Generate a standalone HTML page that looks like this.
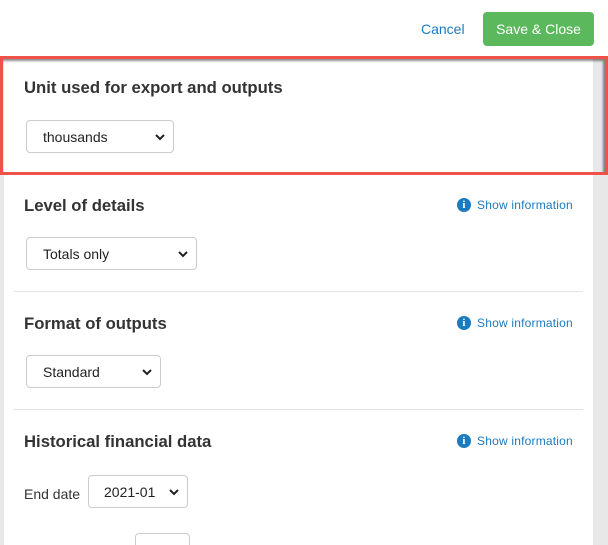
<!DOCTYPE html>
<html><head><style>
*{box-sizing:border-box;margin:0;padding:0}
html,body{width:608px;height:545px;overflow:hidden}
body{background:#fff;font-family:"Liberation Sans",Arial,sans-serif;color:#333;position:relative}
.abs{position:absolute}
.panel{left:4px;top:58px;width:589px;height:487px;background:#fff}
.lgray{left:0;top:58px;width:4px;height:487px;background:#e8e8e8}
.rgray{left:593px;top:58px;width:15px;height:487px;background:#e8e8e8}
.red{left:0;top:56px;width:608px;height:119px;border:3px solid #f0524a;box-shadow:inset -2px 2px 2px rgba(0,0,0,.45)}
.title{font-size:16.7px;font-weight:bold;left:24px}
.sel{border:1px solid #ccc;border-radius:4px;height:33px;font-size:14px;color:#222;background:#fff}
.sel span{position:absolute;left:16px;top:8px}
.sel svg{position:absolute;right:8px;top:13px}
.sep{left:14px;width:569px;height:1px;background:#e3e3e3}
.info{left:457px;font-size:12px;color:#1a7bc0;display:flex;align-items:center;height:14px;letter-spacing:0.2px}
.info i{display:inline-block;width:14px;height:14px;border-radius:50%;background:#1a7bc0;color:#fff;font-style:normal;font-weight:bold;font-size:11px;text-align:center;line-height:14px;font-family:"Liberation Serif",serif;margin-right:6px}
</style></head><body>
<div class="abs" style="left:421px;top:21px;font-size:14px;color:#1a7bc0">Cancel</div>
<div class="abs" style="left:483px;top:12px;width:111px;height:34px;background:#5cb85c;border-radius:4px;color:#fff;font-size:14px;text-align:center;line-height:34px">Save &amp; Close</div>
<div class="abs panel"></div><div class="abs lgray"></div><div class="abs rgray"></div>
<div class="abs red"></div>
<div class="abs title" style="top:78px">Unit used for export and outputs</div>
<div class="abs sel" style="left:26px;top:120px;width:148px"><span>thousands</span><svg width="10" height="7" viewBox="0 0 10 7"><path d="M1 1l4 4 4-4" stroke="#222" stroke-width="2" fill="none"/></svg></div>

<div class="abs title" style="top:196px">Level of details</div>
<div class="abs info" style="top:198px"><i>i</i>Show information</div>
<div class="abs sel" style="left:26px;top:237px;width:171px"><span>Totals only</span><svg width="10" height="7" viewBox="0 0 10 7"><path d="M1 1l4 4 4-4" stroke="#222" stroke-width="2" fill="none"/></svg></div>
<div class="abs sep" style="top:291px"></div>

<div class="abs title" style="top:314px">Format of outputs</div>
<div class="abs info" style="top:316px"><i>i</i>Show information</div>
<div class="abs sel" style="left:26px;top:355px;width:135px"><span>Standard</span><svg width="10" height="7" viewBox="0 0 10 7"><path d="M1 1l4 4 4-4" stroke="#222" stroke-width="2" fill="none"/></svg></div>
<div class="abs sep" style="top:409px"></div>

<div class="abs title" style="top:432px">Historical financial data</div>
<div class="abs info" style="top:434px"><i>i</i>Show information</div>
<div class="abs" style="left:24px;top:486px;font-size:14px">End date</div>
<div class="abs sel" style="left:88px;top:475px;width:100px"><span style="left:15px">2021-01</span><svg width="10" height="7" viewBox="0 0 10 7"><path d="M1 1l4 4 4-4" stroke="#222" stroke-width="2" fill="none"/></svg></div>
<div class="abs sel" style="left:135px;top:533px;width:55px"></div>
</body></html>
